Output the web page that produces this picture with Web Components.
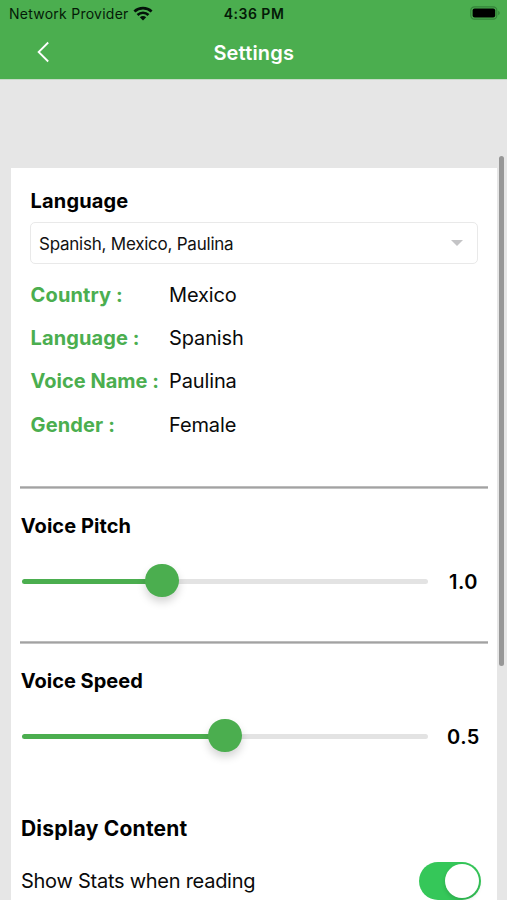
<!DOCTYPE html>
<html lang="en">
<head>
<meta charset="utf-8">
<title>Settings</title>
<style>
html, body { margin: 0; height: 100%; overflow: hidden; }
body { font-family: Inter, "Liberation Sans", sans-serif; background: #e6e6e6; color: #0a0a0a; }
</style>
</head>
<body>
<settings-screen></settings-screen>
<script>
const define = (name, html, init) => customElements.define(name, class extends HTMLElement {
  connectedCallback() {
    if (this.shadowRoot) return;
    const root = this.attachShadow({ mode: 'open' });
    root.innerHTML = html;
    if (init) init(this, root);
  }
});

define('status-bar', `
<style>
:host { display: grid; grid-template-columns: 1fr auto 1fr; align-items: center; height: 28px; box-sizing: border-box; padding: 0 7px 0 9px; font-size: 14px; line-height: 28px; color: #041a07; white-space: nowrap; }
.left { display: flex; align-items: center; gap: 4px; letter-spacing: .25px; }
.time { font-weight: 600; letter-spacing: .5px; margin-left: -1px; }
.right { display: flex; justify-content: flex-end; }
svg { display: block; }
.left svg { margin-top: -2px; }
.right svg { margin-top: -2px; }
</style>
<div class="left"><span>Network Provider</span>
<svg width="20" height="15" viewBox="0 0 20 15" fill="none" stroke="#04120a" stroke-width="2.7"><path d="M1.4 5.4C6.2 .9 13.8 .9 18.6 5.4"/><path d="M4.5 8.9C7.6 6 12.4 6 15.5 8.9"/><path d="M10 14.4 6.8 11.2C8.6 9.6 11.4 9.6 13.2 11.2Z" fill="#04120a" stroke="none"/></svg></div>
<div class="time">4:36 PM</div>
<div class="right"><svg width="30" height="14" viewBox="0 0 30 14"><rect x=".8" y=".8" width="26" height="12.4" rx="3.6" fill="none" stroke="#35843a" stroke-width="1.2"/><rect x="2.6" y="2.5" width="22.6" height="9" rx="2" fill="#000"/><path d="M28.2 4.8C30.2 5.6 30.2 8.4 28.2 9.2Z" fill="#35843a"/></svg></div>`);

define('nav-bar', `
<style>
:host { display: grid; grid-template-columns: 1fr auto 1fr; align-items: center; height: 51px; padding: 0 36px; color: #fff; }
.title { font-size: 20px; font-weight: 600; letter-spacing: .17px; line-height: 24px; margin: -2px 0 0 .5px; }
svg { display: block; margin-top: -3px; }
</style>
<svg width="14" height="22" viewBox="0 0 14 22" fill="none" stroke="#fff" stroke-width="1.8"><path d="M12.2 1.5 2.6 11 12.2 20.5"/></svg>
<div class="title"><slot></slot></div><span></span>`);

define('section-title', `
<style>
:host { display: block; height: 24px; line-height: 24px; font-size: 20px; font-weight: 700; color: #000; white-space: nowrap; }
</style><slot></slot>`);

define('voice-select', `
<style>
:host { display: flex; align-items: center; justify-content: space-between; box-sizing: border-box; height: 42px; border: 1px solid #e9e9e9; border-radius: 5px; padding: 0 14px 0 8px; font-size: 17px; letter-spacing: -.235px; color: #111; }
span { padding-top: 1px; }
</style><span><slot></slot></span>
<svg width="12" height="6" viewBox="0 0 12 6"><path d="M0 0H12L6 6Z" fill="#c4c4c6"/></svg>`);

define('detail-row', `
<style>
:host { display: grid; grid-template-columns: 138.5px 1fr; align-items: center; height: 43.2px; padding-left: .6px; font-size: 20px; line-height: 24px; white-space: nowrap; }
.k { color: #4bae4f; font-weight: 700; letter-spacing: var(--ks); }
.v { letter-spacing: -.14px; }
</style><span class="k"><slot name="label"></slot></span><span class="v"><slot></slot></span>`);

define('rule-line', `
<style>
:host { display: block; height: 3px; background: linear-gradient(#bcbcbc 1px, #a2a2a2 1px 2px, #c4c4c4 2px); }
</style>`);

define('value-slider', `
<style>
:host { display: grid; grid-template-columns: 406px 1fr; align-items: center; height: 40px; }
.track { position: relative; height: 5px; border-radius: 3px; background: linear-gradient(90deg, #4bae4f var(--p), #e3e3e3 var(--p)); }
.thumb { position: absolute; left: var(--p); top: 50%; width: 33.5px; height: 33.5px; margin: -18px 0 0 -16.75px; border-radius: 50%; background: #4bae4f; box-shadow: 0 5px 9px rgba(0,0,0,.17); }
.num { font-size: 20px; line-height: 24px; font-weight: 600; letter-spacing: .4px; text-align: center; padding-left: 11px; color: #000; }
</style>
<div class="track"><div class="thumb"></div></div><div class="num"><slot></slot></div>`,
(el, root) => root.querySelector('.track').style.setProperty('--p', el.getAttribute('position')));

define('toggle-row', `
<style>
:host { display: flex; align-items: center; justify-content: space-between; height: 38px; font-size: 20px; letter-spacing: -.26px; white-space: nowrap; }
.switch { display: flex; justify-content: flex-end; box-sizing: border-box; width: 62.5px; height: 38px; padding: 2px; border-radius: 19px; background: #35c759; }
.knob { width: 34px; height: 34px; border-radius: 50%; background: #fff; box-shadow: 0 2px 4px rgba(0,0,0,.15); }
</style><span><slot></slot></span><div class="switch"><div class="knob"></div></div>`);

define('scroll-thumb', `
<style>
:host { position: absolute; left: 499px; top: 156px; width: 5px; height: 510px; border-radius: 2.5px; background: #979797; }
</style>`);

define('settings-screen', `
<style>
:host { display: flex; flex-direction: column; position: relative; width: 507px; height: 900px; overflow: hidden; }
header { flex: none; background: #4bae4f; height: 79px; box-shadow: 0 .5px 0 #a5cfa8; }
.card { flex: none; display: flex; flex-direction: column; box-sizing: border-box; margin: 89px 10px 0 10.5px; height: 760px; background: #fff; padding: 21px 9px 0 9.8px; }
.voice { display: flex; flex-direction: column; padding: 0 10.5px 0 9.7px; }
.voice section-title { padding-left: .6px; }
voice-select { margin: 9px 0 9.5px; }
rule-line.first { margin-top: 39.8px; }
.block { display: flex; flex-direction: column; padding: 25px 0 0 .5px; }
.block value-slider { margin: 23.7px 0 0 1px; }
rule-line.second { margin-top: 39.6px; }
.block.speed { padding-top: 24.6px; }
.display { margin-top: 60.1px; padding: 0 6.7px 0 .7px; }
toggle-row { margin-top: 21.7px; }
</style>
<header><status-bar></status-bar><nav-bar>Settings</nav-bar></header>
<div class="card">
  <div class="voice">
    <section-title style="letter-spacing:.15px">Language</section-title>
    <voice-select>Spanish, Mexico, Paulina</voice-select>
    <detail-row style="--ks:.12px"><span slot="label">Country :</span>Mexico</detail-row>
    <detail-row style="--ks:.1px"><span slot="label">Language :</span>Spanish</detail-row>
    <detail-row style="--ks:0px"><span slot="label">Voice Name :</span>Paulina</detail-row>
    <detail-row style="--ks:.12px"><span slot="label">Gender :</span>Female</detail-row>
  </div>
  <rule-line class="first"></rule-line>
  <div class="block"><section-title style="letter-spacing:.06px">Voice Pitch</section-title><value-slider position="34.5%">1.0</value-slider></div>
  <rule-line class="second"></rule-line>
  <div class="block speed"><section-title>Voice Speed</section-title><value-slider position="50%">0.5</value-slider></div>
  <div class="display"><section-title style="font-size:21px;letter-spacing:.22px">Display Content</section-title><toggle-row>Show Stats when reading</toggle-row></div>
</div>
<scroll-thumb></scroll-thumb>`);
</script>
</body>
</html>
